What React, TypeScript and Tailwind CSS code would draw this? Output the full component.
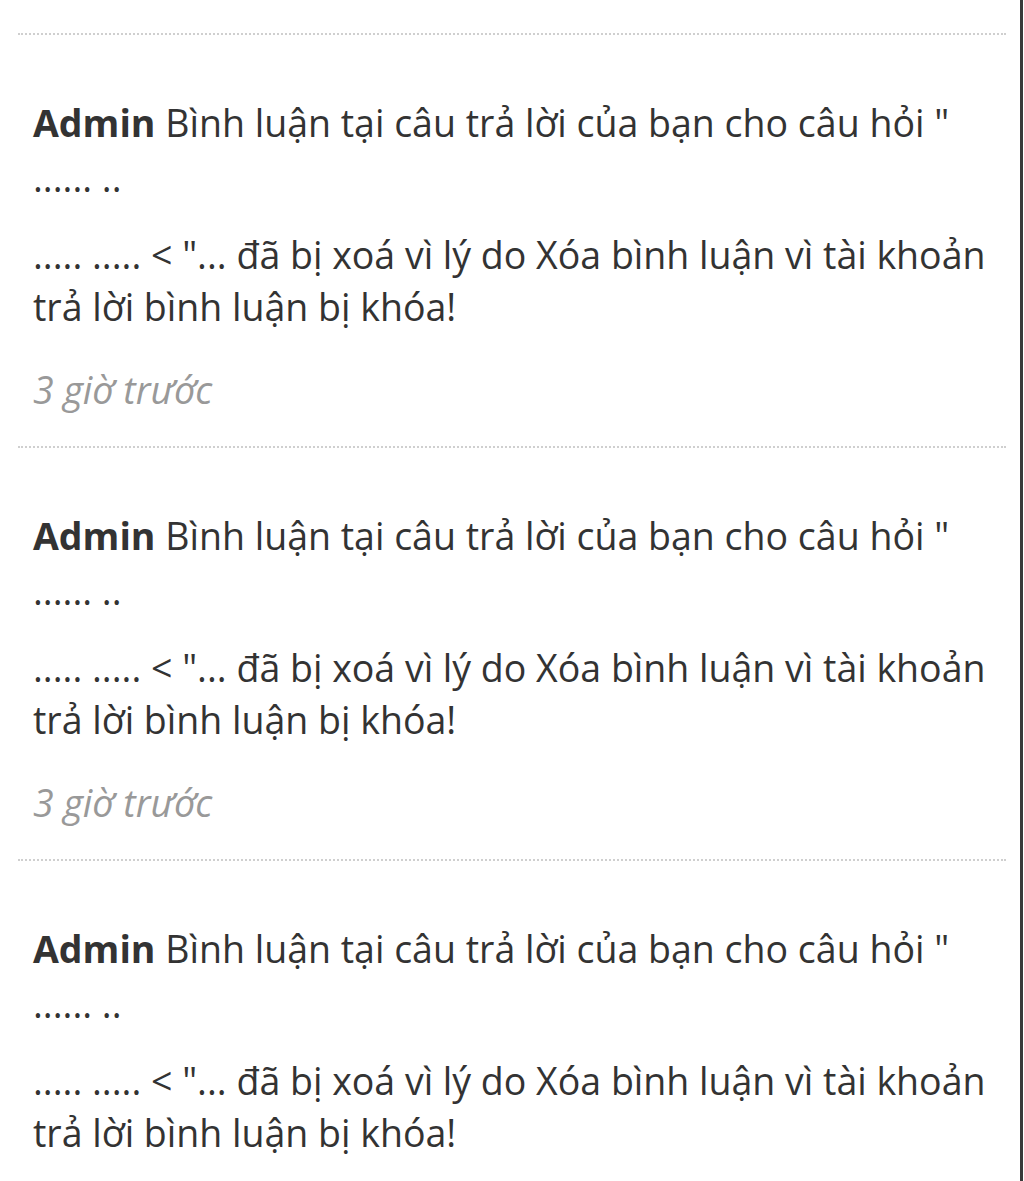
export default function App() {
  const items = [0, 1, 2];
  return (
    <div className="h-[1181px] overflow-hidden">
      <div className="min-h-[1181px] w-[1023px] border-r-[3px] border-[#3a3a3a] bg-white pt-[33px] font-['Open_Sans',sans-serif] text-[#333]">
        {items.map((i) => (
          <div key={i}>
            {/* dotted separator */}
            <div className="ml-[18px] mr-[14px] border-t-2 border-dotted border-[#cfcfcf]" />
            <div className="px-[33px] pt-[62px] pb-[30px] text-[37.5px] leading-[52px]">
              <p>
                <span className="font-bold">Admin</span> Bình luận tại câu trả lời của bạn cho câu hỏi "
              </p>
              <p className="mt-[3px]">...... ..</p>
              <p className="mt-[25px]">
                ..... ..... &lt; "... đã bị xoá vì lý do Xóa bình luận vì tài khoản trả lời bình luận bị khóa!
              </p>
              <p className="mt-[31px] italic text-[#999]">3 giờ trước</p>
            </div>
          </div>
        ))}
      </div>
    </div>
  );
}
